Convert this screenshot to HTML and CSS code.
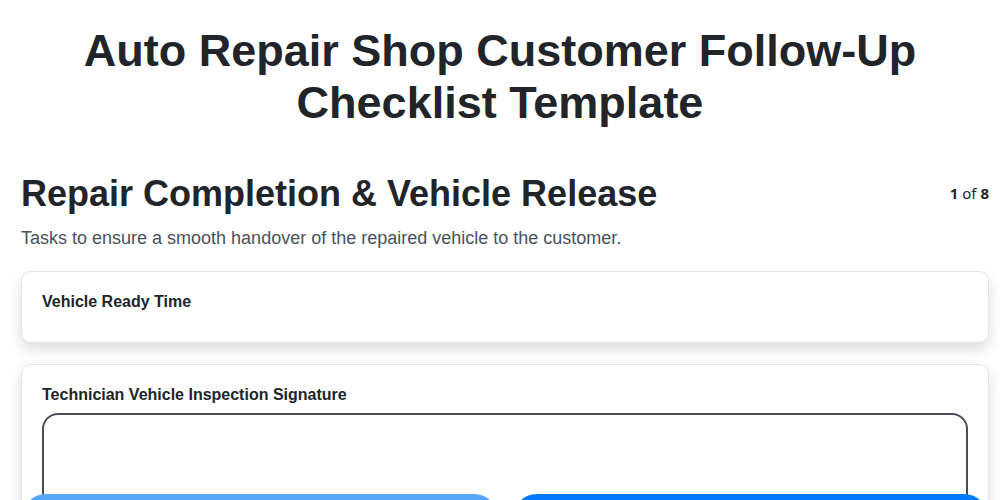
FILE: index.html
```html
<!DOCTYPE html>
<html lang="en">
<head>
  <meta charset="UTF-8" />
  <meta name="viewport" content="width=device-width, initial-scale=1.0" />
  <title>Auto Repair Shop Customer Follow-Up Checklist Template</title>
  <link rel="stylesheet" href="styles.css">
</head>
<body>
  <h1 class="doc-title">Auto Repair Shop Customer Follow-Up Checklist Template</h1>

  <section class="step">
    <div class="step-head">
      <h2>Repair Completion &amp; Vehicle Release</h2>
      <div class="step-count"><b>1</b> of <b>8</b></div>
    </div>
    <p class="step-desc">Tasks to ensure a smooth handover of the repaired vehicle to the customer.</p>

    <div class="field-card">
      <label class="field-label">Vehicle Ready Time</label>
    </div>

    <div class="field-card">
      <label class="field-label">Technician Vehicle Inspection Signature</label>
      <div class="sig-pad"></div>
    </div>
  </section>

  <div class="nav-bar">
    <button class="nav-btn prev">Previous</button>
    <button class="nav-btn next">Next</button>
  </div>
</body>
</html>
```

FILE: styles.css
```css
:root {
  --text-color: #212529;
  --muted: #4a5160;
  --card-border: #e4e5ea;
  --sig-border: #4a4e5c;
  --btn-light: #56a8fd;
  --btn-main: #007bff;
}

* { box-sizing: border-box; }

body {
  margin: 0;
  background: #fff;
  color: var(--text-color);
  font-family: 'Liberation Sans', Arial, sans-serif;
}

.doc-title {
  margin: 25px 0 0;
  padding: 0 21px;
  text-align: center;
  font-size: 45px;
  line-height: 52px;
  font-weight: 700;
}

.step {
  margin-top: 43px;
  padding: 0 11px 0 21px;
}

.step-head {
  display: flex;
  justify-content: space-between;
  align-items: flex-start;
}

.step-head h2 {
  margin: 0;
  font-size: 36px;
  line-height: 44px;
  font-weight: 700;
}

.step-count {
  font-family: 'Noto Sans', sans-serif;
  font-size: 15px;
  padding-top: 11px;
}

.step-desc {
  margin: 12px 0 22px;
  font-size: 18px;
  color: var(--muted);
}

.field-card {
  background: #fff;
  border: 1px solid var(--card-border);
  border-radius: 10px;
  box-shadow: 0 6px 14px rgba(0, 0, 0, 0.14);
  padding: 20px 20px 31px;
  margin-bottom: 21px;
}

.field-label {
  display: block;
  font-size: 16px;
  font-weight: 700;
  line-height: 19px;
}

.sig-pad {
  margin-top: 9px;
  height: 200px;
  border: 2px solid var(--sig-border);
  border-radius: 16px;
}

.nav-bar {
  position: fixed;
  left: 22px;
  right: 12px;
  top: 494px;
  display: flex;
  gap: 15px;
}

.nav-btn {
  flex: 1;
  height: 48px;
  border: none;
  border-radius: 24px;
  color: #fff;
  font-family: 'Liberation Sans', Arial, sans-serif;
  font-size: 16px;
  font-weight: 700;
}

.nav-btn.prev { background: var(--btn-light); }
.nav-btn.next { background: var(--btn-main); }
```
